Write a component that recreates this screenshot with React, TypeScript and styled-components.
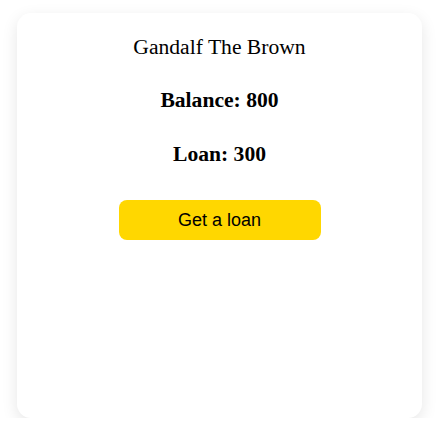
import React from "react";
import styled, { createGlobalStyle } from "styled-components";

const Global = createGlobalStyle`
  html, body { margin: 0; padding: 0; background: #ffffff; }
`;

const Page = styled.div`
  padding: 13px 16px 0 17px;
`;

const Card = styled.div`
  width: 405px;
  height: 405px;
  box-sizing: border-box;
  background: #fff;
  border-radius: 14px;
  box-shadow: 0 5px 16px rgba(0, 0, 0, 0.1);
  display: flex;
  flex-direction: column;
  align-items: center;
  padding-top: 22px;
  font-family: "Liberation Serif", "Times New Roman", serif;
  color: #000;
`;

const Name = styled.div`
  font-size: 21.6px;
  line-height: 25px;
`;

const Stat = styled.div<{ $gap: number }>`
  font-size: 21.6px;
  line-height: 25px;
  font-weight: bold;
  margin-top: ${(p) => p.$gap}px;
`;

const Button = styled.button`
  margin-top: 33px;
  width: 202px;
  height: 40px;
  border: none;
  border-radius: 8px;
  background: #ffd700;
  font-family: "Liberation Sans", Arial, sans-serif;
  font-size: 18px;
  color: #000;
  cursor: pointer;
`;

export default function App() {
  return (
    <>
      <Global />
      <Page>
        <Card>
          <Name>Gandalf The Brown</Name>
          <Stat $gap={28}>Balance: 800</Stat>
          <Stat $gap={29}>Loan: 300</Stat>
          <Button>Get a loan</Button>
        </Card>
      </Page>
    </>
  );
}
